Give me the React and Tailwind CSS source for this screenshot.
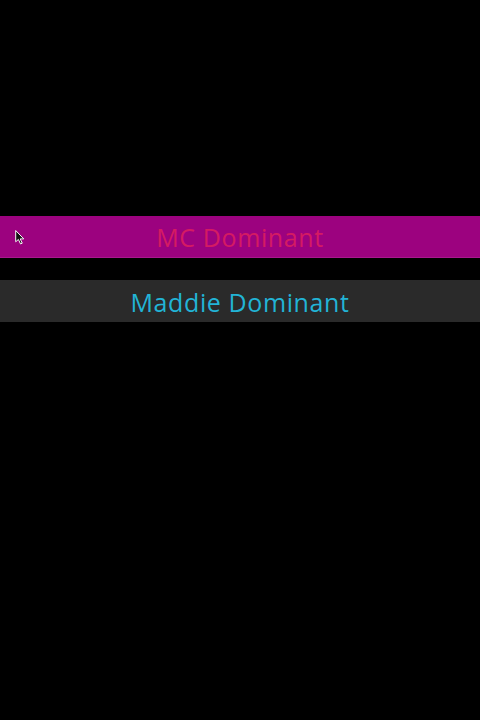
import React from 'react'

const App = () => {
  return (
    <div className='bg-black w-[480px] h-[720px] pt-[216px] flex flex-col gap-[22px]' style={{ fontFamily: '"Open Sans", sans-serif' }}>
      <div className='relative h-[42px] bg-[#9c027f] flex items-center justify-center border-b border-[#a8188e]'>
        <svg className='absolute left-[15px] top-[14px]' width='10' height='15' viewBox='0 0 9 14'>
          <path d='M0.5 0.5 L0.5 11 L3 8.8 L5 13 L6.6 12.3 L4.7 8.3 L8 8.3 Z' fill='#111' stroke='#fff' strokeWidth='0.9' />
        </svg>
        <span className='pt-[2px] text-[25px] leading-none text-[#d41b63] tracking-[0.6px]'>MC Dominant</span>
      </div>
      <div className='h-[42px] bg-[#2a2a2a] flex items-center justify-center'>
        <span className='pt-[2px] text-[25px] leading-none text-[#22b4d6] tracking-[0.6px]'>Maddie Dominant</span>
      </div>
    </div>
  )
}

export default App
